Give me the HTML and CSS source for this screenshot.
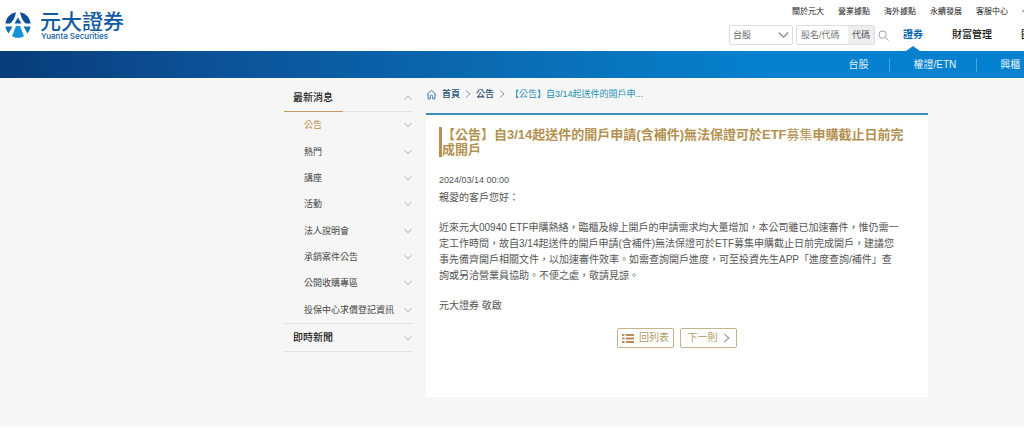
FILE: index.html
```html
<!DOCTYPE html>
<html lang="zh-Hant">
<head>
<meta charset="utf-8">
<title>元大證券 - 公告</title>
<link rel="stylesheet" href="styles.css">
</head>
<body>
<svg class="defs" aria-hidden="true">
  <symbol id="down" viewBox="0 0 8 6"><path d="M0.5 1.2 4 4.6 7.5 1.2"/></symbol>
  <symbol id="up" viewBox="0 0 8 6"><path d="M0.5 4.6 4 1.2 7.5 4.6"/></symbol>
  <symbol id="right" viewBox="0 0 6 8"><path d="M1 0.5 5 4 1 7.5"/></symbol>
</svg>
<header class="header">
  <a class="logo" href="#">
    <svg class="logo-mark" viewBox="0 0 26 26" aria-hidden="true">
      <path fill="#0d4f96" d="M11 .2A12.800 12.800 0 0 0 .3 11.500H5Q9.500 8.500 11 .2Z"/>
      <path fill="#0d4f96" d="M15 .2A12.800 12.800 0 0 1 25.700 11.500H21Q16.500 8.500 15 .2Z"/>
      <path fill="#0d5aa5" d="M13 5.500 16.500 11.500H9.500Z"/>
      <path fill="#1472b8" d="M.4 14.500H7.500L3.500 21.500A12.800 12.800 0 0 1 .4 14.500Z"/>
      <path fill="#1472b8" d="M25.600 14.500H18.500L22.500 21.500A12.800 12.800 0 0 0 25.600 14.500Z"/>
      <path fill="#1592d6" d="M11 14H15L19 24.300A12.800 12.800 0 0 1 7 24.300Z"/>
    </svg>
    <span class="logo-text"><span class="logo-name">元大證券</span><span class="logo-sub">Yuanta Securities</span></span>
  </a>
  <div class="header-right">
    <nav class="top-links">
      <a href="#">關於元大</a><a href="#">營業據點</a><a href="#">海外據點</a><a href="#">永續發展</a><a href="#">客服中心</a>
      <a href="#" aria-label="會員"><svg class="user" viewBox="0 0 10 10"><path d="M0 8.500Q1.500 6.500 3.500 4.500"/></svg></a>
    </nav>
    <div class="main-row">
      <form class="search">
        <span class="select-wrap"><select aria-label="市場"><option>台股</option></select><svg class="select-arrow" viewBox="0 0 8 6"><use href="#down"/></svg></span>
        <span class="code-box"><input type="text" aria-label="股名/代碼" placeholder="股名/代碼"><button type="button">代碼</button></span>
        <button class="search-btn" type="button" aria-label="搜尋"><svg viewBox="0 0 12 12"><circle cx="5" cy="5" r="4"/><path d="M8 8 11.500 11.500"/></svg></button>
      </form>
      <nav class="main-nav"><a class="active" href="#">證券</a><a href="#">財富管理</a><a href="#">國際</a></nav>
    </div>
  </div>
</header>
<nav class="subnav"><div class="subnav-list"><a href="#">台股</a><a href="#">權證/ETN</a><a href="#">興櫃</a></div></nav>
<main class="page">
  <aside class="side">
    <a class="side-head open" href="#">最新消息<svg class="chev"><use href="#up"/></svg></a>
    <ul class="side-list">
      <li><a class="current" href="#">公告<svg class="chev"><use href="#down"/></svg></a></li>
      <li><a href="#">熱門<svg class="chev"><use href="#down"/></svg></a></li>
      <li><a href="#">講座<svg class="chev"><use href="#down"/></svg></a></li>
      <li><a href="#">活動<svg class="chev"><use href="#down"/></svg></a></li>
      <li><a href="#">法人說明會<svg class="chev"><use href="#down"/></svg></a></li>
      <li><a href="#">承銷案件公告<svg class="chev"><use href="#down"/></svg></a></li>
      <li><a href="#">公開收購專區<svg class="chev"><use href="#down"/></svg></a></li>
      <li><a href="#">投保中心求償登記資訊<svg class="chev"><use href="#down"/></svg></a></li>
    </ul>
    <a class="side-head closed" href="#">即時新聞<svg class="chev"><use href="#down"/></svg></a>
  </aside>
  <section class="content">
    <nav class="crumbs">
      <svg class="home" viewBox="0 0 12 11"><path d="M.8 5.800 6 1 11.200 5.800M2.300 5V10.300H4.700V7.500Q4.700 6.300 6 6.300T7.300 7.500V10.300H9.700V5"/></svg>
      <a href="#">首頁</a><svg class="sep"><use href="#right"/></svg>
      <a href="#">公告</a><svg class="sep"><use href="#right"/></svg>
      <span class="here">【公告】自3/14起送件的開戶申...</span>
    </nav>
    <article class="card">
      <h1>【公告】自3/14起送件的開戶申請(含補件)無法保證可於ETF<span class="light">募集</span>申購截止日前完成開戶</h1>
      <time>2024/03/14 00:00</time>
      <p>親愛的客戶您好：</p>
      <p>近來元大00940 ETF申購熱絡，臨櫃及線上開戶的申請需求均大量增加，本公司雖已加速審件，惟仍需一<br>定工作時間，故自3/14起送件的開戶申請(含補件)無法保證可於ETF募集申購截止日前完成開戶，建議您<br>事先備齊開戶相關文件，以加速審件效率。如需查詢開戶進度，可至投資先生APP「進度查詢/補件」查<br>詢或另洽營業員協助。不便之處，敬請見諒。</p>
      <p>元大證券 敬啟</p>
      <div class="actions">
        <button type="button"><svg class="list" viewBox="0 0 12 9"><path d="M0 1H2.500M3.800 1H12M0 4.500H2.500M3.800 4.500H12M0 8H2.500M3.800 8H12"/></svg>回列表</button>
        <button type="button">下一則<svg class="next" viewBox="0 0 6 8"><use href="#right"/></svg></button>
      </div>
    </article>
  </section>
</main>
</body>
</html>
```
FILE: styles.css
```css
* { box-sizing: border-box; }
body {
  margin: 0;
  background: #fff;
  color: #555;
  font: 10px/16px "Liberation Sans", "Noto Sans CJK TC", sans-serif;
  overflow-x: hidden;
}
a { color: inherit; text-decoration: none; }
svg { fill: none; flex: none; }
button, input, select { font: inherit; color: inherit; margin: 0; }
.defs { position: absolute; width: 0; height: 0; }

.header {
  display: grid;
  grid-template-columns: 71% minmax(0, 1fr);
  height: 51px;
  overflow: hidden;
  white-space: nowrap;
}
.logo { display: flex; gap: 9px; padding: 11px 0 0 5px; color: #0f5ba3; }
.logo-mark { width: 26px; height: 26px; margin-top: 1px; }
.logo-text { display: flex; flex-direction: column; }
.logo-name { font-size: 21px; line-height: 21px; font-weight: 500; }
.logo-sub { font: 500 8px/8px "Inter", sans-serif; padding-left: 1px; }

.header-right { padding-left: 2px; }
.top-links {
  display: flex;
  gap: 14px;
  padding: 4px 0 0 63px;
  font-size: 8px;
  color: #222;
}
.user { width: 10px; height: 10px; stroke: #555; }
.main-row { display: flex; padding-top: 5px; }
.search { display: flex; gap: 3px; font-size: 9px; color: #666; }
.select-wrap { position: relative; }
.select-wrap select {
  appearance: none;
  width: 64px;
  height: 20px;
  padding: 0 3px;
  border: 1px solid #ddd;
  border-radius: 2px;
  background: #fff;
}
.select-arrow { position: absolute; right: 4px; top: 6px; width: 11px; height: 8px; stroke: #888; stroke-width: 1; }
.code-box { display: flex; width: 79px; height: 20px; border: 1px solid #ddd; border-radius: 2px; }
.code-box input { flex: 1; min-width: 0; padding: 0 0 0 4px; border: 0; background: #fff; }
.code-box input::placeholder { color: #777; opacity: 1; }
.code-box button { width: 26px; padding: 0; border: 0; background: #eee; color: #555; }
.search-btn { padding: 0; border: 0; background: none; height: 20px; width: 12px; }
.search-btn svg { display: block; width: 11px; height: 11px; stroke: #999; stroke-width: 1; }
.main-nav { display: flex; gap: 29px; padding-left: 13px; color: #111; font-weight: 500; line-height: 20px; }
.main-nav .active { color: #0b6cb0; font-weight: 700; display: flex; flex-direction: column; align-items: center; }
.main-nav .active::after {
  content: "";
  border: 7px solid transparent;
  border-top: 0;
  border-bottom: 5px solid #0d80cc;
  margin-top: 1px;
}

.subnav {
  height: 27px;
  padding-left: 81%;
  overflow: hidden;
  background: linear-gradient(90deg, #083c7a 0%, #0c4f94 18%, #0a6db5 50%, #0681cf 75%, #0681cf 100%);
  color: #e8f3fb;
  line-height: 27px;
  white-space: nowrap;
}
.subnav-list { display: flex; align-items: center; }
.subnav a { padding-right: 21px; margin-left: 19px; }
.subnav a + a { padding: 0 20px 0 23px; margin: 0; border-left: 1px solid #4aa5dd; line-height: 14px; }

.page {
  display: grid;
  grid-template-columns: 129px minmax(0, 1fr);
  gap: 13px;
  padding: 5px 96px 30px 284px;
  background: #f6f6f6;
}
.side { color: #444; }
.side a { display: flex; align-items: center; justify-content: space-between; }
.chev { width: 8px; height: 6px; stroke: #aaa; stroke-width: 1; }
.side-head { color: #222; font-weight: 500; height: 29px; padding: 0 1px 0 9px; border-bottom: 1px solid #e2e2e2; }
.side-head.open {
  border-bottom: 0;
  background: linear-gradient(90deg, #c09a68 46%, #e2e2e2 46%) bottom / 100% 1px no-repeat;
}
.side-head.closed { border-top: 1px solid #e2e2e2; }
.side-list { list-style: none; margin: 0; padding: 0; min-height: 211px; display: grid; grid-auto-rows: 1fr; font-size: 9px; }
.side-list li { display: grid; }
.side-list a { padding: 0 1px 0 20px; }
.side-list .current { color: #b98a45; }

.crumbs { display: flex; align-items: center; height: 30px; padding-bottom: 8px; font-size: 9px; color: #1d4d75; }
.crumbs a { font-weight: 500; }
.home { width: 11px; height: 11px; stroke: #2d6f9f; stroke-width: 1; margin-right: 5px; }
.sep { width: 6px; height: 8px; stroke: #8297a8; stroke-width: 1; margin: 0 5px; }
.here { color: #2591b5; }
.card { min-height: 284px; padding: 12px 13px 24px; border-top: 2px solid #3c8dbc; background: #fff; }
h1 { margin: 0 0 15px; border-left: 3px solid #b98d55; font-size: 13px; line-height: 15px; color: #b39150; }
.light { font-weight: 400; }
time { display: block; font-size: 9px; }
p { margin: 0 0 14px; }
time + p { margin-top: 2px; }
.actions { display: flex; justify-content: center; gap: 6px; }
.actions button {
  display: flex;
  align-items: center;
  justify-content: center;
  gap: 5px;
  width: 57px;
  height: 20px;
  padding: 0;
  border: 1px solid #c2b48f;
  border-radius: 2px;
  background: #fff;
  color: #b09a62;
}
.list { width: 12px; height: 9px; stroke: #b98d55; stroke-width: 2; }
.actions .next { width: 7px; height: 10px; stroke: #999; }
```
